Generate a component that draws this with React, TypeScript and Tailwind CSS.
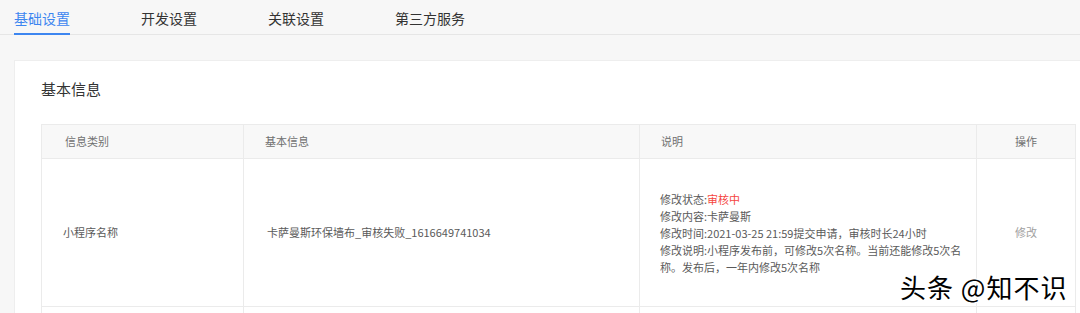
import React from "react";

const font = { fontFamily: '"Noto Sans CJK SC", "Noto Sans", sans-serif' };

export default function App() {
  const tabs = ["基础设置", "开发设置", "关联设置", "第三方服务"];
  return (
    <div className="relative w-[1080px] h-[313px] overflow-hidden bg-[#f7f7f7]" style={font}>
      {/* Tabs */}
      <div className="flex h-[35px] border-b border-[#e6e6e6] pl-[14px] gap-[71px]">
        {tabs.map((t, i) => (
          <div
            key={t}
            className={
              i === 0
                ? "flex h-[35px] items-center border-b-2 border-[#3d86f0] text-[14px] leading-[20px] text-[#3d86f0] pt-[2px]"
                : "flex h-[35px] items-center text-[14px] leading-[20px] text-[#333333]"
            }
          >
            {t}
          </div>
        ))}
      </div>

      {/* Card */}
      <div className="mt-[25px] ml-[14px] w-[1100px] bg-white border border-[#eeeeee] pl-[26px] pt-[17px]">
        <div className="text-[15px] leading-[22px] text-[#333333]">基本信息</div>
        <div className="mt-[24px] w-[1035px] border-l border-t border-[#ebebeb] text-[11px]">
          {/* Header */}
          <div className="grid grid-cols-[202px_396px_337px_99px] h-[34px] bg-[#f8f8f8] text-[#707070]">
            <div className="flex items-center pl-[23px] border-r border-b border-[#ebebeb]">信息类别</div>
            <div className="flex items-center pl-[21px] border-r border-b border-[#ebebeb]">基本信息</div>
            <div className="flex items-center pl-[21px] border-r border-b border-[#ebebeb]">说明</div>
            <div className="flex items-center justify-center border-r border-b border-[#ebebeb]">操作</div>
          </div>
          {/* Row 1 */}
          <div className="grid grid-cols-[202px_396px_337px_99px] h-[148px] text-[#5a5a5a]">
            <div className="flex items-center pl-[21px] border-r border-b border-[#ebebeb]">小程序名称</div>
            <div className="flex items-center pl-[23px] border-r border-b border-[#ebebeb]">
              卡萨曼斯环保墙布_审核失败_1616649741034
            </div>
            <div className="flex items-center pl-[20px] pr-[12px] border-r border-b border-[#ebebeb]">
              <div className="leading-[17px] pt-[2px]">
                <div>
                  修改状态:<span className="text-[#f5463f]">审核中</span>
                </div>
                <div>修改内容:卡萨曼斯</div>
                <div>修改时间:2021-03-25 21:59提交申请，审核时长24小时</div>
                <div>修改说明:小程序发布前，可修改5次名称。当前还能修改5次名称。发布后，一年内修改5次名称</div>
              </div>
            </div>
            <div className="flex items-center justify-center border-r border-b border-[#ebebeb] text-[#a0a0a0]">
              修改
            </div>
          </div>
          {/* Row 2 (cut off) */}
          <div className="grid grid-cols-[202px_396px_337px_99px] h-[60px]">
            <div className="border-r border-b border-[#ebebeb]"></div>
            <div className="border-r border-b border-[#ebebeb]"></div>
            <div className="border-r border-b border-[#ebebeb]"></div>
            <div className="border-r border-b border-[#ebebeb]"></div>
          </div>
        </div>
      </div>

      {/* Watermark */}
      <div
        className="absolute left-[900px] top-[270px] text-[26px] leading-[34px] text-black whitespace-nowrap tracking-[1px]"
        style={{ textShadow: "1px 1px 0 #fff, -1px -1px 0 #fff, 1px -1px 0 #fff, -1px 1px 0 #fff" }}
      >
        头条 @知不识
      </div>
    </div>
  );
}
